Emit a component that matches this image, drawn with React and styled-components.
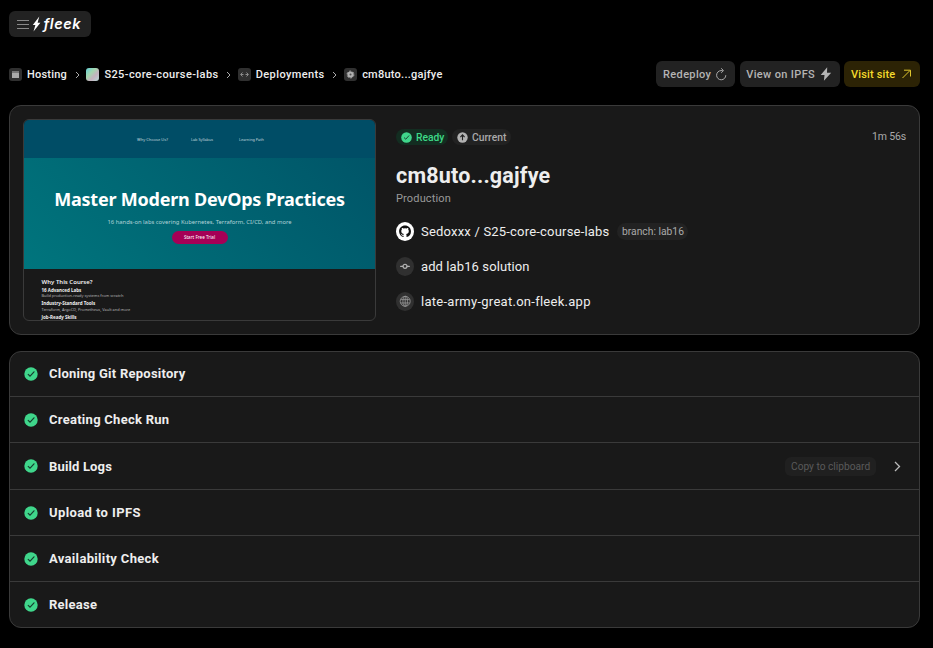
import React from "react";
import styled, { createGlobalStyle } from "styled-components";

const Global = createGlobalStyle`
  * { box-sizing: border-box; }
  body { margin: 0; background: #000; font-family: Roboto, "Liberation Sans", sans-serif; color: #eee; }
`;

const Page = styled.div`
  width: 933px;
  height: 648px;
  padding: 11px 13px 0 9px;
  overflow: hidden;
  display: flex;
  flex-direction: column;
`;
const Label = styled.span`
  display: inline-block;
  flex: none;
  width: ${(p) => p.$w}px;
  font-size: ${(p) => p.$size || 11}px;
  font-weight: ${(p) => p.$weight || 500};
  letter-spacing: ${(p) => p.$ls || 0}px;
  line-height: 15px;
  padding-top: ${(p) => p.$drop || 0}px;
  padding-bottom: ${(p) => p.$rise || 0}px;
  white-space: nowrap;
`;
const LogoButton = styled.button`
  width: 82px;
  height: 26px;
  padding: 0 0 0 8px;
  border: 0;
  border-radius: 6px;
  background: #222;
  color: #fff;
  display: flex;
  align-items: center;
  gap: 3px;
`;
const Wordmark = styled.span`
  font: italic 600 14.5px Inter, sans-serif;
  line-height: 20px;
  letter-spacing: 0.55px;
  margin-left: -0.5px;
`;
const Toolbar = styled.div`
  display: flex;
  justify-content: space-between;
  align-items: center;
  height: 26px;
  margin: 24px 4px 18px 0;
  width: 911px;
`;
const Crumbs = styled.nav`
  display: flex;
  align-items: center;
`;
const CrumbIcon = styled.span`
  width: 13px;
  height: 13px;
  border-radius: 3px;
  margin: 1px 5px 0 0;
  background: ${(p) => (p.$gradient ? "linear-gradient(135deg,#70d2cf 8%,#a4d6af 38%,#c5b1be 64%,#b7d9d6)" : "#303030")};
  display: flex;
  align-items: center;
  justify-content: center;
`;
const CrumbChevron = styled.svg`
  width: 5px;
  height: 8px;
  margin: 1px 6.7px 0 7.7px;
`;
const Actions = styled.div`
  display: flex;
  gap: 4.5px;
`;
const Button = styled.button`
  width: ${(p) => p.$w}px;
  height: 26px;
  border: 0;
  padding: 0 8px 0 6.7px;
  border-radius: 6px;
  display: flex;
  align-items: center;
  justify-content: space-between;
  font-family: inherit;
  color: ${(p) => (p.$accent ? "#f4da2c" : "#b4b4b4")};
  background: ${(p) => (p.$accent ? "#2c2305" : "#222")};
`;
const Summary = styled.section`
  width: 911px;
  height: 230px;
  border: 1px solid #3a3a3a;
  border-radius: 12px;
  background: #191919;
  padding: 13px;
  display: flex;
  gap: 20px;
`;
const Preview = styled.div`
  width: 353px;
  height: 202px;
  flex: none;
  border: 1px solid #3a3a3a;
  border-radius: 6px;
  overflow: hidden;
  font-family: "Noto Sans", sans-serif;
  color: #fff;
`;
const PreviewNav = styled.div`
  height: 38px;
  background: #004d66;
  padding-left: 113px;
  display: flex;
  align-items: center;
  color: #c4d8df;
`;
const Hero = styled.div`
  height: 111px;
  background: linear-gradient(45deg, #00757d, #005568);
  display: flex;
  flex-direction: column;
  align-items: center;
`;
const HeroTitle = styled.div`
  margin-top: 28px;
  font-size: 18px;
  font-weight: 700;
  line-height: 26px;
  white-space: nowrap;
  letter-spacing: -0.22px;
`;
const HeroText = styled.div`
  font-size: 5.85px;
  line-height: 8px;
  margin-top: 6px;
  color: #b2d3d7;
  white-space: nowrap;
`;
const HeroButton = styled.div`
  width: 56px;
  height: 13px;
  margin-top: 5px;
  border-radius: 7px;
  background: #a50056;
  font-size: 4.6px;
  line-height: 13px;
  text-align: center;
  white-space: nowrap;
`;
const Course = styled.div`
  padding: 8.5px 0 0 17.5px;
  display: flex;
  flex-direction: column;
`;
const CourseLine = styled.div`
  font-size: ${(p) => p.$size || 3.9}px;
  line-height: ${(p) => p.$lh || 6.8}px;
  height: ${(p) => p.$lh || 6.8}px;
  font-weight: ${(p) => p.$weight || 400};
  color: ${(p) => (p.$weight ? "#f0f0f0" : "#b8b8b8")};
  white-space: nowrap;
`;
const Details = styled.div`
  flex: 1;
  display: flex;
  flex-direction: column;
  padding-top: 10px;
`;
const TopLine = styled.div`
  display: flex;
  align-items: center;
  height: 17px;
  gap: 4px;
  color: #aaa;
`;
const Badge = styled.span`
  width: ${(p) => p.$w}px;
  height: ${(p) => p.$h || 16}px;
  border-radius: 9px;
  padding-left: 5px;
  display: flex;
  flex: none;
  align-items: center;
  gap: 4px;
  color: ${(p) => (p.$green ? "#3dd987" : "#aaa")};
  background: ${(p) => (p.$green ? "#132d21" : "#222")};
`;
const Duration = styled.div`
  margin: -3px 0 0 auto;
  line-height: 1;
`;
const Title = styled.h1`
  margin: 17px 0 0;
  font-size: 21.5px;
  line-height: 28px;
  font-weight: 700;
  letter-spacing: 0.2px;
`;
const Environment = styled.div`
  display: flex;
  color: #999;
  height: 15px;
  margin: 1px 0 16px;
`;
const InfoRow = styled.div`
  display: flex;
  align-items: center;
  height: 19px;
  margin-bottom: 16px;
  gap: 7px;
`;
const Steps = styled.section`
  width: 911px;
  height: 277px;
  margin-top: 16px;
  border: 1px solid #3a3a3a;
  border-radius: 12px;
  background: #191919;
  overflow: hidden;
`;
const Step = styled.div`
  height: ${(p) => p.$h}px;
  padding: 0 18px 0 14px;
  display: flex;
  align-items: center;
  gap: 11px;
  border-bottom: ${(p) => (p.$last ? "0" : "1px solid #3a3a3a")};
`;
const CopyButton = styled.button`
  width: 91px;
  height: 19px;
  padding: 0 0 0 6px;
  margin-left: auto;
  margin-right: 7px;
  border: 0;
  border-radius: 6px;
  background: #202020;
  color: #5a5a5a;
  font-family: inherit;
  text-align: left;
  display: flex;
  align-items: center;
`;

const Check = ({ s = 14, dark = "#174030" }) => (
  <svg width={s} height={s} viewBox="0 0 14 14">
    <circle cx="7" cy="7" r="6.7" fill="#3fd68b" />
    <path d="M4.2 7.4 6.1 9.2 10 4.8" fill="none" stroke={dark} strokeWidth="1.2" strokeLinecap="round" strokeLinejoin="round" />
  </svg>
);
const Chevron = () => (
  <CrumbChevron viewBox="0 0 5 8">
    <path d="M1 1 4 4 1 7" fill="none" stroke="#aaa" strokeWidth="1" />
  </CrumbChevron>
);
const GitHub = () => (
  <svg width="18" height="19" viewBox="0 0 18 19">
    <ellipse cx="9" cy="9.5" rx="9" ry="9.4" fill="#fff" />
    <path transform="translate(3.1 3.5) scale(.74)" fill="#111" d="M8 0C3.58 0 0 3.58 0 8c0 3.54 2.29 6.53 5.47 7.59.4.07.55-.17.55-.38v-1.49c-2.01.37-2.53-.49-2.69-.94-.09-.23-.48-.94-.82-1.13-.28-.15-.68-.52-.01-.53.63-.01 1.08.58 1.23.82.72 1.21 1.87.87 2.33.66.07-.52.28-.87.51-1.07-1.78-.2-3.64-.89-3.64-3.95 0-.87.31-1.59.82-2.15-.08-.2-.36-1.02.08-2.12 0 0 .67-.21 2.2.82a7.5 7.5 0 0 1 4 0c1.53-1.04 2.2-.82 2.2-.82.44 1.1.16 1.92.08 2.12.51.56.82 1.27.82 2.15 0 3.07-1.87 3.75-3.65 3.95.29.25.54.73.54 1.48v2.2c0 .21.15.46.55.38A8.01 8.01 0 0 0 16 8c0-4.42-3.58-8-8-8Z" />
  </svg>
);
const Commit = () => (
  <svg width="18" height="19" viewBox="0 0 18 19">
    <ellipse cx="9" cy="9.5" rx="9" ry="9.4" fill="#303030" />
    <path d="M4.6 9.3H7M11 9.3h2.4" stroke="#b0b0b0" strokeWidth="1.2" strokeLinecap="round" />
    <circle cx="9" cy="9.3" r="2" fill="none" stroke="#b0b0b0" strokeWidth="1.2" />
  </svg>
);
const Globe = () => (
  <svg width="18" height="19" viewBox="0 0 18 19">
    <ellipse cx="9" cy="9.5" rx="9" ry="9.4" fill="#303030" />
    <g fill="none" stroke="#999" strokeWidth=".8">
      <circle cx="9.2" cy="9.3" r="5" />
      <ellipse cx="9.2" cy="9.3" rx="2.3" ry="5" />
      <path d="M4.7 7.6h9M4.7 11h9M9.2 4.3v10" />
    </g>
  </svg>
);

const steps = [
  { name: "Cloning Git Repository", h: 45, ls: 0.25, rise: 2 },
  { name: "Creating Check Run", h: 46, ls: 0.27, rise: 1 },
  { name: "Build Logs", h: 47, ls: 0.15, rise: 0 },
  { name: "Upload to IPFS", h: 46, ls: 0.4, rise: 1 },
  { name: "Availability Check", h: 46, ls: 0.33, rise: 1 },
  { name: "Release", h: 45, ls: 0.25, rise: 1 },
];

export default function App() {
  return (
    <Page>
      <Global />
      <LogoButton>
        <svg width="12" height="10" viewBox="0 0 12 10"><path d="M0 1.5h12M0 5.5h12M0 9.5h12" stroke="#8a8a8a" /></svg>
        <svg width="9" height="16" viewBox="0 0 9 16"><path d="M7.3.5.8 9h2.6L1.5 15.5 8.4 6.8H5.6Z" fill="#fff" /></svg>
        <Wordmark>fleek</Wordmark>
      </LogoButton>
      <Toolbar>
        <Crumbs>
          <CrumbIcon><svg width="7" height="7" viewBox="0 0 7 7"><path d="M0 0h7v1H0Z" fill="#777" /><path d="M0 1.4h7V7H0Z" fill="#aaa" /></svg></CrumbIcon>
          <Label $w={40} $ls={0.2} $drop={1}>Hosting</Label>
          <Chevron />
          <CrumbIcon $gradient />
          <Label $w={114} $ls={0.4} $drop={1}>S25-core-course-labs</Label>
          <Chevron />
          <CrumbIcon><svg width="9" height="5" viewBox="0 0 9 5" fill="none" stroke="#999" strokeWidth=".9"><path d="M2.5.5.6 2.5l1.9 2M6.5.5l1.9 2-1.9 2M1 2.5h2.5M5.5 2.5H8" /></svg></CrumbIcon>
          <Label $w={69} $ls={0.4} $drop={1}>Deployments</Label>
          <Chevron />
          <CrumbIcon><svg width="9" height="9" viewBox="0 0 9 9"><circle cx="4.5" cy="4.5" r="3.1" fill="#b2b2b2" /><circle cx="4.5" cy="4.5" r="3.4" fill="none" stroke="#b2b2b2" strokeWidth="1" strokeDasharray="2 1.56" /><circle cx="4.5" cy="4.5" r="1" fill="#555" /></svg></CrumbIcon>
          <Label $w={81} $ls={0.25} $drop={1}>cm8uto...gajfye</Label>
        </Crumbs>
        <Actions>
          <Button $w={79}>
            <Label $w={49} $ls={0.35} $drop={1}>Redeploy</Label>
            <svg width="12" height="13" viewBox="0 0 12 13" fill="none" stroke="#aaa" strokeWidth="1"><path d="M7.8 2.6H6a4.6 4.6 0 1 0 4.8 4.6M6.2.3 8.5 2.6 6.2 4.9" /></svg>
          </Button>
          <Button $w={100}>
            <Label $w={69} $ls={0.35} $drop={1}>View on IPFS</Label>
            <svg width="12" height="14" viewBox="0 0 12 14"><path d="M7.2.3.7 8.1h3.8L3.9 13.7 11.2 5.7H7Z" fill="#b4b4b4" /></svg>
          </Button>
          <Button $w={76} $accent>
            <Label $w={45} $ls={0.15} $drop={1}>Visit site</Label>
            <svg width="11" height="10" viewBox="0 0 11 10" fill="none" stroke="#dfc62d" strokeWidth="1"><path d="M1.5 9 9 1.5M3 1.2h6.5v6.3" /></svg>
          </Button>
        </Actions>
      </Toolbar>
      <Summary>
        <Preview>
          <PreviewNav>
            <Label $w={54} $size={4} $weight={400}>Why Choose Us?</Label>
            <Label $w={48} $size={3.8} $weight={400}>Lab Syllabus</Label>
            <Label $w={30} $size={3.8} $weight={400}>Learning Path</Label>
          </PreviewNav>
          <Hero>
            <HeroTitle>Master Modern DevOps Practices</HeroTitle>
            <HeroText>16 hands-on labs covering Kubernetes, Terraform, CI/CD, and more</HeroText>
            <HeroButton>Start Free Trial</HeroButton>
          </Hero>
          <Course>
            <CourseLine $size={6} $lh={9} $weight={600}>Why This Course?</CourseLine>
            <CourseLine $size={4.5} $weight={700}>16 Advanced Labs</CourseLine>
            <CourseLine>Build production-ready systems from scratch</CourseLine>
            <CourseLine $size={4.5} $weight={700}>Industry-Standard Tools</CourseLine>
            <CourseLine>Terraform, ArgoCD, Prometheus, Vault and more</CourseLine>
            <CourseLine $size={4.5} $weight={700}>Job-Ready Skills</CourseLine>
          </Course>
        </Preview>
        <Details>
          <TopLine>
            <Badge $green $w={52}><Check s={11} /><Label $w={28} $size={10.3} $drop={1}>Ready</Label></Badge>
            <Badge $w={59}>
              <svg width="11" height="11" viewBox="0 0 11 11"><circle cx="5.5" cy="5.5" r="5.2" fill="#b2b2b2" /><path d="M5.5 8.2V3.1M3.4 5.1l2.1-2.2 2.1 2.2" fill="none" stroke="#222" strokeWidth="1.1" /></svg>
              <Label $w={34} $size={10.3} $drop={1}>Current</Label>
            </Badge>
            <Duration><Label $w={34} $size={10.5} $ls={-0.15} $weight={400} $drop={1}>1m 56s</Label></Duration>
          </TopLine>
          <Title>cm8uto...gajfye</Title>
          <Environment><Label $w={56} $ls={0.15} $weight={400}>Production</Label></Environment>
          <InfoRow>
            <GitHub />
            <Label $w={189} $size={13} $ls={0.2} $weight={400} $rise={1}>Sedoxxx / S25-core-course-labs</Label>
            <Badge $w={71} $h={17}><Label $w={62} $size={10.3} $weight={400}>branch: lab16</Label></Badge>
          </InfoRow>
          <InfoRow><Commit /><Label $w={109} $size={13} $ls={0.1} $weight={400} $rise={1}>add lab16 solution</Label></InfoRow>
          <InfoRow><Globe /><Label $w={170} $size={13} $ls={0.27} $weight={400} $rise={1}>late-army-great.on-fleek.app</Label></InfoRow>
        </Details>
      </Summary>
      <Steps>
        {steps.map(({ name, h, ls, rise }, i) => (
          <Step key={name} $h={h} $last={i === steps.length - 1}>
            <Check />
            <Label $w={150} $size={13} $weight={700} $ls={ls} $rise={rise}>{name}</Label>
            {name === "Build Logs" && (
              <>
                <CopyButton><Label $w={79} $size={10.2} $weight={400}>Copy to clipboard</Label></CopyButton>
                <svg width="7" height="11" viewBox="0 0 7 11"><path d="M1 1 5.5 5.5 1 10" fill="none" stroke="#bbb" strokeWidth="1.3" /></svg>
              </>
            )}
          </Step>
        ))}
      </Steps>
    </Page>
  );
}
